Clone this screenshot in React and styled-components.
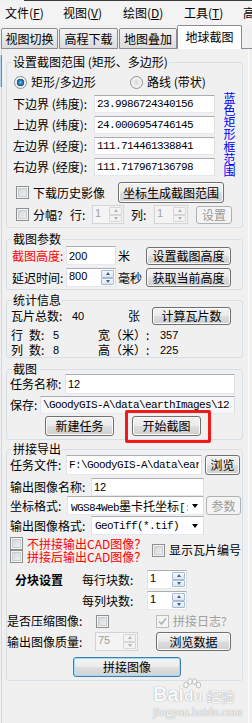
import styled, { createGlobalStyle, css } from "styled-components"

const GlobalStyle = createGlobalStyle`
  html, body { margin: 0; padding: 0; background: #f0f0f0; }
  body {
    font-family: "Noto Sans CJK SC", "Noto Sans", sans-serif;
    font-size: 12px;
    color: #000;
  }
  * { box-sizing: border-box; }
`;

const Window = styled.div`
  position: relative;
  width: 252px;
  height: 723px;
  overflow: hidden;
  background: #f0f0f0;
`;

const TopEdge = styled.div`
  height: 1px;
  margin-left: 24px;
  background: #3b3b3b;
`;

const MenuBar = styled.div`
  display: flex;
  align-items: center;
  height: 24px;
  padding-left: 5px;
  white-space: nowrap;
  background: #f3f3f3;
`;

const MenuItem = styled.div`
  flex: 0 0 ${p => p.$w}px;
  line-height: 14px;
`;

const TabStrip = styled.div`
  display: flex;
  align-items: flex-end;
  height: 24px;
  padding-left: 1px;
`;

const Tab = styled.div`
  display: flex;
  align-items: center;
  justify-content: center;
  flex: 0 0 ${p => p.$w}px;
  height: ${p => (p.$active ? 24 : 21)}px;
  margin-right: ${p => p.$gap ?? 0}px;
  border: 1px solid #898c95;
  border-radius: 2px 2px 0 0;
  background: linear-gradient(#f3f3f3, #dcdcdc);
  line-height: 14px;
  white-space: nowrap;
  ${p => p.$active && css`
    border-bottom: none;
    background: #fff;
    padding-bottom: 2px;
  `}
`;

const TabFill = styled.div`
  flex: 1;
  height: 100%;
  border-bottom: 1px solid #898c95;
`;

const TabPage = styled.div`
  display: flex;
  flex-direction: column;
  width: 248px;
  height: 674px;
  margin-left: 1px;
  padding: 0 5px 0 4px;
  border-left: 1px solid #d6d6d6;
  border-right: 1px solid #fdfdfd;
`;

const Group = styled.fieldset`
  display: flex;
  flex-direction: column;
  min-width: 0;
  margin: ${p => p.$mt ?? 0}px 0 0;
  padding: 0;
  border: 1px solid #d5dfe5;
  border-radius: 3px;
`;

const Legend = styled.legend`
  margin-left: 5px;
  padding: 0 1px;
  height: 12px;
  line-height: 12px;
  white-space: nowrap;
`;

const GroupBody = styled.div`
  display: flex;
  flex-direction: column;
  padding: ${p => p.$pt ?? 0}px 0 ${p => p.$pb ?? 0}px ${p => p.$pl ?? 0}px;
`;

const Row = styled.div`
  display: flex;
  align-items: center;
  height: ${p => p.$h}px;
  margin-top: ${p => p.$mt ?? 0}px;
  margin-left: ${p => p.$ml ?? 0}px;
  white-space: nowrap;
`;

const Label = styled.span`
  ${p => p.$w && css`flex: 0 0 ${p.$w}px;`}
  margin-left: ${p => p.$ml ?? 0}px;
  color: ${p => p.$color ?? "#000"};
  font-weight: ${p => (p.$bold ? 700 : 400)};
  line-height: 12px;
  white-space: nowrap;
`;

const Num = styled.span`
  ${p => p.$w && css`flex: 0 0 ${p.$w}px;`}
  font-family: "Liberation Sans", sans-serif;
  font-size: 11px;
  line-height: 12px;
`;

const Input = styled.input`
  flex: 0 0 ${p => p.$w}px;
  width: ${p => p.$w}px;
  height: ${p => p.$h ?? 18}px;
  margin: 0;
  padding: 0 2px;
  border: 1px solid;
  border-color: #abadb3 #dbdfe6 #e3e9ef #e2e3ea;
  border-radius: 0;
  outline: none;
  background: ${p => (p.$muted ? "#f7f7f7" : "#fff")};
  color: #000;
  font-family: ${p => (p.$mono ? '"Liberation Mono", monospace' : '"Liberation Sans", sans-serif')};
  font-size: 11px;
  letter-spacing: ${p => (p.$mono ? "-0.6px" : "0")};
`;

const Button = styled.button`
  display: flex;
  align-items: center;
  justify-content: center;
  flex: 0 0 ${p => p.$w}px;
  width: ${p => p.$w}px;
  height: ${p => p.$h ?? 20}px;
  margin: 0 0 0 ${p => p.$ml ?? 0}px;
  padding: 0;
  border: 1px solid #707070;
  border-radius: 3px;
  background: linear-gradient(#f2f2f2 0%, #ebebeb 48%, #dddddd 52%, #cfcfcf 100%);
  box-shadow: inset 0 0 0 1px #fbfbfb;
  color: #000;
  font-family: "Noto Sans CJK SC", sans-serif;
  font-size: 12px;
  line-height: 14px;
  white-space: nowrap;
  ${p => p.disabled && css`
    border-color: #adb2b5;
    background: #f4f4f4;
    box-shadow: none;
    color: #9a9a9a;
  `}
  ${p => p.$focus && css`
    border-color: #3c7fb1;
    box-shadow: inset 0 0 0 1px #9fdcf7;
    background: linear-gradient(#f4f4f4 0%, #ececec 48%, #dedede 52%, #d2d2d2 100%);
  `}
`;

const Highlight = styled.span`
  position: relative;
  display: inline-flex;
  margin-left: ${p => p.$ml ?? 0}px;
  &::after {
    content: "";
    position: absolute;
    left: -7px;
    right: -10px;
    top: -6px;
    bottom: -7px;
    border: 3px solid #f01a1a;
    border-radius: 2px;
    pointer-events: none;
  }
`;

const Check = styled.span`
  flex: 0 0 13px;
  display: inline-flex;
  align-items: center;
  justify-content: center;
  width: 13px;
  height: 13px;
  border: 1px solid #8e8f8f;
  background: linear-gradient(135deg, #cdd0d4 0%, #f6f6f6 100%);
  box-shadow: inset 0 0 0 1px #f4f4f4, inset 0 0 0 2px #c9ccd0;
  ${p => p.$disabled && css`
    border-color: #bcbcbc;
    background: #f4f4f4;
    box-shadow: none;
  `}
`;

const CheckItem = styled.label`
  display: flex;
  align-items: center;
  gap: 4px;
  ${p => p.$w && css`flex: 0 0 ${p.$w}px;`}
  height: ${p => p.$h ?? 13}px;
  margin-left: ${p => p.$ml ?? 0}px;
  color: ${p => p.$color ?? "#000"};
  line-height: 12px;
  white-space: nowrap;
`;

const Radio = styled.span`
  flex: 0 0 13px;
  width: 13px;
  height: 13px;
  border: 1px solid #8e8f8f;
  border-radius: 50%;
  background: ${p => (p.$on
    ? "radial-gradient(circle, #6cc3ee 0, #1f6fb2 2.5px, #18487d 3.5px, #e9e9e9 4px, #fafafa 6px)"
    : "radial-gradient(circle, #d6d8db 0, #e8e9ea 3px, #fafafa 6px)")};
`;

const RadioOption = styled.label`
  display: flex;
  align-items: center;
  gap: 4px;
  flex: 0 0 ${p => p.$w}px;
  line-height: 12px;
`;

const CoordBlock = styled.div`
  display: flex;
  margin-top: 5px;
`;

const CoordList = styled.div`
  display: flex;
  flex-direction: column;
  gap: 3px;
`;

const VerticalLink = styled.span`
  margin: -3px 0 0 8px;
  writing-mode: vertical-rl;
  line-height: 13px;
  letter-spacing: 0.3px;
  color: #0000ff;
`;

const Spin = styled.div`
  display: flex;
  flex: 0 0 ${p => p.$w}px;
  width: ${p => p.$w}px;
  height: ${p => p.$h ?? 19}px;
  border: 1px solid;
  border-color: #abadb3 #dbdfe6 #e3e9ef #e2e3ea;
  background: #fff;
  ${p => p.$disabled && css`
    border-color: #d2d4d8;
    background: #f4f4f4;
  `}
`;

const SpinValue = styled.span`
  flex: 1;
  padding: 1px 0 0 2px;
  font-family: "Liberation Sans", sans-serif;
  font-size: 11px;
  line-height: 13px;
  color: ${p => (p.$disabled ? "#a0a0a0" : "#000")};
`;

const SpinButtons = styled.span`
  display: flex;
  flex-direction: column;
  width: 13px;
  margin: 1px 1px 1px 0;
`;

const SpinHalf = styled.span`
  flex: 1;
  display: flex;
  align-items: center;
  justify-content: center;
  border: 1px solid ${p => (p.$disabled ? "#d6d6d6" : "#a7bbd3")};
  border-radius: 1px;
  background: ${p => (p.$disabled ? "#f3f3f3" : "linear-gradient(#f5f9fd, #dbe6f3)")};
  &::before {
    content: "";
    width: 0;
    height: 0;
    border-left: 2.5px solid transparent;
    border-right: 2.5px solid transparent;
    ${p => (p.$down
      ? css`border-top: 3px solid ${p.$disabled ? "#b3b3b3" : "#4a5f86"};`
      : css`border-bottom: 3px solid ${p.$disabled ? "#b3b3b3" : "#4a5f86"};`)}
  }
`;

const Combo = styled.div`
  display: flex;
  align-items: center;
  flex: 0 0 ${p => p.$w}px;
  width: ${p => p.$w}px;
  height: 19px;
  padding-left: 3px;
  border: 1px solid;
  border-color: #abadb3 #dbdfe6 #e3e9ef #e2e3ea;
  background: #fff;
`;

const ComboText = styled.span`
  flex: 1;
  overflow: hidden;
  white-space: nowrap;
  font-family: "Liberation Mono", monospace;
  font-size: 11px;
  letter-spacing: -0.6px;
`;

const Han = styled.span`
  font-family: "Noto Sans CJK SC", sans-serif;
  font-size: 12px;
  letter-spacing: 0;
`;

const ComboArrow = styled.span`
  width: 0;
  height: 0;
  margin: 0 5px 0 4px;
  border-left: 3.5px solid transparent;
  border-right: 3.5px solid transparent;
  border-top: 4px solid #000;
`;

const StatRow = styled.div`
  display: grid;
  grid-template-columns: 42px 45px 62px auto;
  align-items: center;
  height: 14px;
  margin-top: ${p => p.$mt ?? 0}px;
  line-height: 12px;
`;

const CheckColumn = styled.div`
  display: flex;
  flex-direction: column;
  flex: 0 0 142px;
`;

const Splitter = styled.div`
  position: absolute;
  left: 0;
  top: 55px;
  width: 2px;
  height: 32px;
  background: #b9d4ee;
  border-right: 1px solid #5b8ec4;
`;

const Watermark = styled.div`
  position: absolute;
  left: 153px;
  top: 682px;
  color: #fafafa;
  text-shadow: 0 0 1px #a8a8a8, 0 0 1px #a8a8a8;
  pointer-events: none;
`;

const MarkLogo = styled.div`
  display: flex;
  align-items: flex-end;
  height: 22px;
  font-family: "Liberation Sans", sans-serif;
  font-weight: 700;
  font-size: 20px;
  line-height: 20px;
`;

const MarkPaw = styled.span`
  position: relative;
  display: inline-block;
  font-size: 15px;
  line-height: 16px;
  svg { position: absolute; left: -1px; top: -10px; }
`;

const MarkWord = styled.span`
  margin-left: 4px;
  font-family: "Noto Sans CJK SC", sans-serif;
  font-size: 14px;
  font-weight: 400;
  line-height: 16px;
`;

const MarkUrl = styled.div`
  margin-top: 2px;
  font-family: "Liberation Serif", serif;
  font-size: 12px;
  line-height: 12px;
`;

const SpinBox = ({ w, value, disabled }) => (
  <Spin $w={w} $disabled={disabled}>
    <SpinValue $disabled={disabled}>{value}</SpinValue>
    <SpinButtons>
      <SpinHalf $disabled={disabled} />
      <SpinHalf $disabled={disabled} $down />
    </SpinButtons>
  </Spin>
);

const TickIcon = () => (
  <svg width="9" height="9" viewBox="0 0 9 9">
    <path d="M1 4.5 L3.5 7 L8 1.5" fill="none" stroke="#b0b0b0" strokeWidth="1.6" />
  </svg>
);

export default function App() {
  return (
    <Window>
      <GlobalStyle />
      <TopEdge />
      <MenuBar>
        <MenuItem $w={58}>文件(<u>F</u>)</MenuItem>
        <MenuItem $w={60}>视图(<u>V</u>)</MenuItem>
        <MenuItem $w={61}>绘图(<u>D</u>)</MenuItem>
        <MenuItem $w={59}>工具(<u>T</u>)</MenuItem>
        <MenuItem $w={20}>高</MenuItem>
      </MenuBar>

      <TabStrip>
        <Tab $w={57} $gap={1}>视图切换</Tab>
        <Tab $w={59} $gap={1}>高程下载</Tab>
        <Tab $w={58}>地图叠加</Tab>
        <Tab $w={65} $active>地球截图</Tab>
        <TabFill />
      </TabStrip>

      <TabPage>
        <Group $mt={7}>
          <Legend>设置截图范围 (矩形、多边形)</Legend>
          <GroupBody $pl={6} $pb={3}>
            <Row $h={16} $mt={6} $ml={1}>
              <RadioOption $w={116}><Radio $on />矩形/多边形</RadioOption>
              <RadioOption $w={90}><Radio />路线 (带状)</RadioOption>
            </Row>
            <CoordBlock>
              <CoordList>
                <Row $h={18}><Label $w={81}>下边界 (纬度):</Label><Input $w={121} $mono readOnly defaultValue="23.9986724340156" /></Row>
                <Row $h={18}><Label $w={81}>上边界 (纬度):</Label><Input $w={121} $mono readOnly defaultValue="24.0006954746145" /></Row>
                <Row $h={18}><Label $w={81}>左边界 (经度):</Label><Input $w={121} $mono readOnly defaultValue="111.714461338841" /></Row>
                <Row $h={18}><Label $w={81}>右边界 (经度):</Label><Input $w={121} $mono readOnly defaultValue="111.717967136798" /></Row>
              </CoordList>
              <VerticalLink>蓝色矩形框范围</VerticalLink>
            </CoordBlock>
            <Row $h={21} $mt={4} $ml={3}>
              <CheckItem $w={102}><Check />下载历史影像</CheckItem>
              <Button $w={106} $h={21}>坐标生成截图范围</Button>
            </Row>
            <Row $h={19} $mt={2} $ml={3}>
              <CheckItem $w={54}><Check />分幅?</CheckItem>
              <Label $w={22}>行:</Label>
              <SpinBox w={32} value="1" disabled />
              <Label $w={23} $ml={7}>列:</Label>
              <SpinBox w={34} value="1" disabled />
              <Button $w={36} $h={18} $ml={8} disabled>设置</Button>
            </Row>
          </GroupBody>
        </Group>

        <Group $mt={5}>
          <Legend>截图参数</Legend>
          <GroupBody $pt={1} $pl={5} $pb={2}>
            <Row $h={19}>
              <Label $w={54} $color="#ff0000">截图高度:</Label>
              <Input $w={50} $h={19} readOnly defaultValue="200" />
              <Label $w={30} $ml={2}>米</Label>
              <Button $w={85} $h={18} $ml={-2}>设置截图高度</Button>
            </Row>
            <Row $h={19} $mt={3}>
              <Label $w={54}>延迟时间:</Label>
              <SpinBox w={50} value="800" />
              <Label $w={30} $ml={2}>毫秒</Label>
              <Button $w={85} $h={19} $ml={-2}>获取当前高度</Button>
            </Row>
          </GroupBody>
        </Group>

        <Group $mt={4}>
          <Legend>统计信息</Legend>
          <GroupBody $pt={1} $pl={4}>
            <Row $h={18}>
              <Label $w={61}>瓦片总数:</Label>
              <Num $w={56}>40</Num>
              <Label $w={24}>张</Label>
              <Button $w={79} $h={18}>计算瓦片数</Button>
            </Row>
            <StatRow $mt={3}>
              <Label>行&ensp;数:</Label><Num>5</Num>
              <Label>宽（米）:</Label><Num>357</Num>
            </StatRow>
            <StatRow $mt={1}>
              <Label>列&ensp;数:</Label><Num>8</Num>
              <Label>高（米）:</Label><Num>225</Num>
            </StatRow>
          </GroupBody>
        </Group>

        <Group $mt={5}>
          <Legend>截图</Legend>
          <GroupBody $pl={3} $pb={3}>
            <Row $h={20} $mt={-1}>
              <Label $w={55}>任务名称:</Label>
              <Input $w={170} $h={20} readOnly defaultValue="12" />
            </Row>
            <Row $h={18} $mt={2}>
              <Label $w={30}>保存:</Label>
              <Input $w={195} $mono $muted readOnly defaultValue="\GoodyGIS-A\data\earthImages\12" />
            </Row>
            <Row $h={20} $mt={2}>
              <Button $w={69} $ml={35}>新建任务</Button>
              <Highlight $ml={18}>
                <Button $w={69}>开始截图</Button>
              </Highlight>
            </Row>
          </GroupBody>
        </Group>

        <Group $mt={3}>
          <Legend>拼接导出</Legend>
          <GroupBody $pl={3} $pb={3}>
            <Row $h={20}>
              <Label $w={56}>任务文件:</Label>
              <Input $w={136} $h={20} $mono readOnly defaultValue="F:\GoodyGIS-A\data\earthImages\12" />
              <Button $w={35} $ml={3}>浏览</Button>
            </Row>
            <Row $h={18} $mt={3}>
              <Label $w={81}>输出图像名称:</Label>
              <Input $w={113} readOnly defaultValue="12" />
            </Row>
            <Row $h={19}>
              <Label $w={57}>坐标格式:</Label>
              <Combo $w={137}>
                <ComboText>WGS84Web<Han>墨卡托坐标</Han>[:</ComboText>
                <ComboArrow />
              </Combo>
              <Button $w={35} $h={19} $ml={2} disabled>参数</Button>
            </Row>
            <Row $h={19} $mt={1}>
              <Label $w={81}>输出图像格式:</Label>
              <Combo $w={113}>
                <ComboText>GeoTiff(*.tif)</ComboText>
                <ComboArrow />
              </Combo>
            </Row>
            <Row $h={26} $mt={2}>
              <CheckColumn>
                <CheckItem $color="#ff0000"><Check />不拼接输出CAD图像？</CheckItem>
                <CheckItem $color="#ff0000"><Check />拼接后输出CAD图像？</CheckItem>
              </CheckColumn>
              <CheckItem><Check />显示瓦片编号</CheckItem>
            </Row>
            <Row $h={19} $mt={7}>
              <Label $w={67} $ml={5} $bold>分块设置</Label>
              <Label $w={65}>每行块数:</Label>
              <SpinBox w={40} value="1" />
            </Row>
            <Row $h={19} $mt={2}>
              <Label $w={65} $ml={72}>每列块数:</Label>
              <SpinBox w={40} value="1" />
            </Row>
            <Row $h={16} $mt={3} $ml={-3}>
              <Label $w={89}>是否压缩图像:</Label>
              <Check />
              <CheckItem $ml={47} $color="#a0a0a0"><Check $disabled><TickIcon /></Check>拼接日志?</CheckItem>
            </Row>
            <Row $h={19} $mt={3} $ml={-3}>
              <Label $w={88}>输出图像质量:</Label>
              <SpinBox w={43} value="75" disabled />
              <Button $w={75} $h={19} $ml={18}>浏览数据</Button>
            </Row>
            <Row $h={20} $mt={6}>
              <Button $w={108} $ml={63} $focus>拼接图像</Button>
            </Row>
          </GroupBody>
        </Group>
      </TabPage>

      <Splitter />
      <Watermark>
        <MarkLogo>
          Bai
          <MarkPaw>
            <svg width="18" height="11" viewBox="0 0 18 11">
              <ellipse cx="3" cy="7" rx="2.2" ry="2.8" fill="#fafafa" stroke="#b0b0b0" strokeWidth="0.8" />
              <ellipse cx="7" cy="3.5" rx="2.2" ry="2.8" fill="#fafafa" stroke="#b0b0b0" strokeWidth="0.8" />
              <ellipse cx="11.5" cy="3.5" rx="2.2" ry="2.8" fill="#fafafa" stroke="#b0b0b0" strokeWidth="0.8" />
              <ellipse cx="15.5" cy="7" rx="2.2" ry="2.8" fill="#fafafa" stroke="#b0b0b0" strokeWidth="0.8" />
            </svg>
            du
          </MarkPaw>
          <MarkWord>经验</MarkWord>
        </MarkLogo>
        <MarkUrl>jingyan.baidu.com</MarkUrl>
      </Watermark>
    </Window>
  )
}
